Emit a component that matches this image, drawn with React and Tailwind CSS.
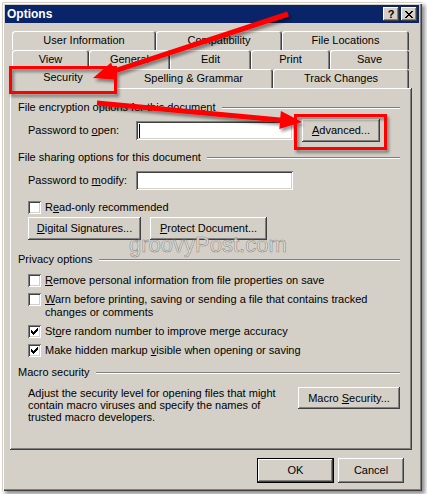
import React from 'react'

const raised = 'bg-[#d4d0c8] shadow-[inset_-1px_-1px_0_#404040,inset_1px_1px_0_#fff,inset_-2px_-2px_0_#808080]'
const sunken = 'bg-white shadow-[inset_1px_1px_0_#808080,inset_-1px_-1px_0_#fff,inset_2px_2px_0_#404040,inset_-2px_-2px_0_#d4d0c8]'
const tabStyle = 'bg-[#d4d0c8] rounded-t-[3px] shadow-[inset_1px_1px_0_#fff,inset_-1px_0_0_#404040,inset_-2px_0_0_#808080] flex items-center justify-center shrink-0'

function Key({ children }) {
  return <span className="underline underline-offset-[1px]">{children}</span>
}

function Tab({ w, children }) {
  return <div className={`${tabStyle} h-[19px] ${w}`}>{children}</div>
}

function Btn({ w, h = 'h-[23px]', children }) {
  return <div className={`${raised} ${w} ${h} shrink-0 flex items-center justify-center`}>{children}</div>
}

function Group({ label }) {
  return (
    <div className="flex items-center h-[13px]">
      <span>{label}</span>
      <div className="flex-1 ml-[6px] h-[2px] border-t border-t-[#808080] border-b border-b-white" />
    </div>
  )
}

function Tick() {
  return (
    <svg width="7" height="7" viewBox="0 0 7 7" shapeRendering="crispEdges">
      <path
        d="M0 2h1v3h-1z M1 3h1v3h-1z M2 4h1v3h-1z M3 3h1v3h-1z M4 2h1v3h-1z M5 1h1v3h-1z M6 0h1v3h-1z"
        fill="#000"
      />
    </svg>
  )
}

function Check({ checked, className = '', children }) {
  return (
    <div className={`flex items-start gap-[4px] ml-[10px] ${className}`}>
      <span className={`${sunken} w-[13px] h-[13px] shrink-0 flex items-center justify-center`}>
        {checked && <Tick />}
      </span>
      <span className="leading-[13px]">{children}</span>
    </div>
  )
}

function Annotations() {
  return (
    <svg className="absolute left-0 top-0 pointer-events-none z-20" width="427" height="494" viewBox="0 0 427 494">
      <defs>
        <filter id="ds" x="-10%" y="-10%" width="130%" height="140%">
          <feDropShadow dx="2" dy="3" stdDeviation="1.6" floodColor="#000" floodOpacity="0.4" />
        </filter>
      </defs>
      <g filter="url(#ds)">
        <rect x="10.5" y="67.5" width="105" height="25" fill="none" stroke="#ff0000" strokeWidth="3" />
        <rect x="295.5" y="115.5" width="90" height="33" fill="none" stroke="#ff0000" strokeWidth="3" />
        <polygon
          points="287.2,11.6 113.1,68.8 111.1,62.6 93,78 116.7,79.7 114.7,73.5 288.8,16.4"
          fill="#ff0000"
        />
        <polygon
          points="96.8,105.5 279.9,122.5 279.3,128.9 302,122 280.9,111 280.3,117.5 97.2,100.5"
          fill="#ff0000"
        />
      </g>
    </svg>
  )
}

export default function App() {
  return (
    <div className="relative w-[427px] h-[494px] bg-white overflow-hidden font-['Liberation_Sans',Arial,sans-serif] text-[11px] leading-[13px] text-black">
      <div className="ml-[2px] mt-[2px] w-[420px] h-[489px] p-[3px] bg-[#d4d0c8] shadow-[inset_1px_1px_0_#d4d0c8,inset_2px_2px_0_#fff,inset_-1px_-1px_0_#404040,inset_-2px_-2px_0_#808080,3px_3px_4px_rgba(0,0,0,0.45)]">
        {/* title bar */}
        <div className="h-[18px] bg-[#0a246a] flex items-center pl-[2px] pr-[2px]">
          <span className="text-white font-bold text-[12px] leading-[14px]">Options</span>
          <div className="ml-auto flex gap-[2px]">
            <div className={`${raised} w-[16px] h-[14px] flex items-center justify-center font-bold text-[11px] leading-none pt-px`}>?</div>
            <div className={`${raised} w-[16px] h-[14px] flex items-center justify-center`}>
              <svg width="8" height="7" viewBox="0 0 8 7" shapeRendering="crispEdges">
                <path
                  d="M0 0h2v1h-2z M6 0h2v1h-2z M1 1h2v1h-2z M5 1h2v1h-2z M2 2h4v1h-4z M3 3h2v1h-2z M2 4h4v1h-4z M1 5h2v1h-2z M5 5h2v1h-2z M0 6h2v1h-2z M6 6h2v1h-2z"
                  fill="#000"
                />
              </svg>
            </div>
          </div>
        </div>

        <div className="ml-[5px] mt-[8px] w-[402px]">
          {/* tab rows */}
          <div className="flex pl-[2px] h-[19px]">
            <Tab w="w-[144px]">User Information</Tab>
            <Tab w="w-[126px]">Compatibility</Tab>
            <Tab w="w-[127px]">File Locations</Tab>
          </div>
          <div className="flex pl-[2px] h-[19px]">
            <Tab w="w-[77px]">View</Tab>
            <Tab w="w-[81px]">General</Tab>
            <Tab w="w-[81px]">Edit</Tab>
            <Tab w="w-[79px]">Print</Tab>
            <Tab w="w-[79px]">Save</Tab>
          </div>
          <div className="flex items-start pl-[2px] h-[19px]">
            <div className={`${tabStyle} relative z-10 -mt-[2px] -ml-[2px] -mr-[2px] w-[106px] h-[22px] pb-[1px]`}>Security</div>
            <Tab w="w-[159px]">Spelling &amp; Grammar</Tab>
            <Tab w="w-[136px]">Track Changes</Tab>
          </div>

          {/* panel */}
          <div className={`${raised} h-[362px] pt-[13px] pl-[8px] pr-[12px] flex flex-col`}>
            <Group label="File encryption options for this document" />
            <div className="mt-[5px] ml-[10px] h-[23px] flex items-center">
              <span className="w-[108px] shrink-0">
                Password to <Key>o</Key>pen:
              </span>
              <div className={`${sunken} w-[157px] h-[19px] flex items-center`}>
                <span className="ml-[3px] w-px h-[14px] bg-black" />
              </div>
              <div className="ml-[9px]">
                <Btn w="w-[78px]">
                  <span>
                    <Key>A</Key>dvanced...
                  </span>
                </Btn>
              </div>
            </div>

            <div className="mt-[9px]">
              <Group label="File sharing options for this document" />
            </div>
            <div className="mt-[7px] ml-[10px] h-[19px] flex items-center">
              <span className="w-[108px] shrink-0">
                Password to <Key>m</Key>odify:
              </span>
              <div className={`${sunken} w-[157px] h-[19px]`} />
            </div>

            <Check className="mt-[11px]">
              R<Key>e</Key>ad-only recommended
            </Check>

            <div className="mt-[3px] ml-[10px] flex gap-[9px]">
              <Btn w="w-[113px]">
                <span>
                  <Key>D</Key>igital Signatures...
                </span>
              </Btn>
              <Btn w="w-[117px]">
                <span>
                  <Key>P</Key>rotect Document...
                </span>
              </Btn>
            </div>

            <div className="mt-[13px]">
              <Group label="Privacy options" />
            </div>
            <Check className="mt-[8px]">
              <Key>R</Key>emove personal information from file properties on save
            </Check>
            <Check className="mt-[6px]">
              <Key>W</Key>arn before printing, saving or sending a file that contains tracked
              <br />
              changes or comments
            </Check>
            <Check checked className="mt-[6px]">
              St<Key>o</Key>re random number to improve merge accuracy
            </Check>
            <Check checked className="mt-[6px]">
              Make hidden markup <Key>v</Key>isible when opening or saving
            </Check>

            <div className="mt-[9px]">
              <Group label="Macro security" />
            </div>
            <div className="mt-[8px] ml-[10px] flex items-start">
              <p className="leading-[12px]">
                Adjust the security level for opening files that might
                <br />
                contain macro viruses and specify the names of
                <br />
                trusted macro developers.
              </p>
              <div className="ml-auto">
                <Btn w="w-[102px]" h="h-[22px]">
                  <span>
                    Macro <Key>S</Key>ecurity...
                  </span>
                </Btn>
              </div>
            </div>
          </div>

          {/* dialog buttons */}
          <div className="mt-[8px] pr-[8px] flex justify-end gap-[4px]">
            <div className="w-[77px] h-[25px] border border-black">
              <div className={`${raised} w-full h-full flex items-center justify-center`}>OK</div>
            </div>
            <Btn w="w-[66px]" h="h-[25px]">Cancel</Btn>
          </div>
        </div>
      </div>

      {/* watermark */}
      <div className="absolute left-[129px] top-[237px] text-[22px] leading-[16px] text-[#e4e2de] [-webkit-text-stroke:0.6px_#8e8c88] pointer-events-none">
        groovyPost.com
      </div>

      <Annotations />
    </div>
  )
}
